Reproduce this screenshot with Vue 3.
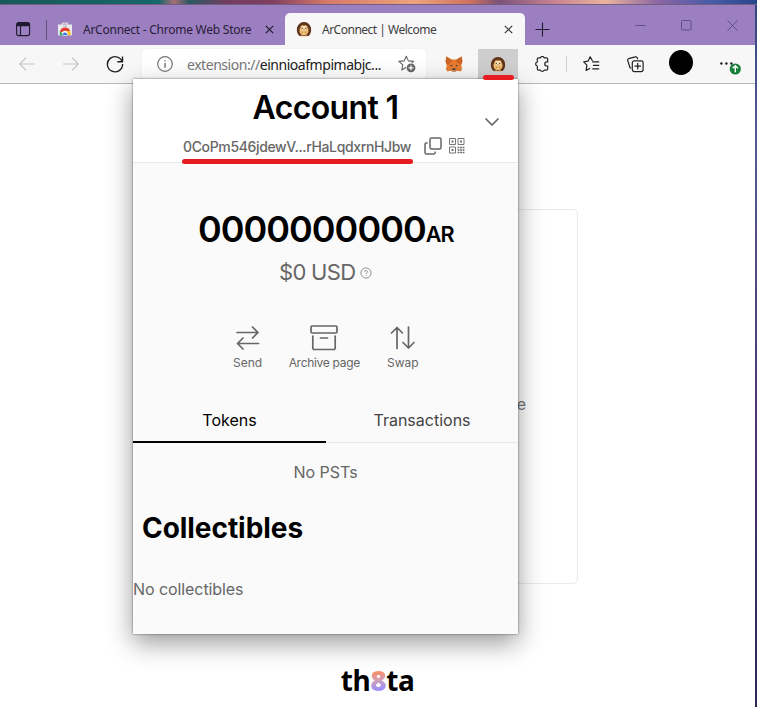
<script setup>
const actions = [
  { id: 'send', label: 'Send' },
  { id: 'archive', label: 'Archive page' },
  { id: 'swap', label: 'Swap' },
]
</script>

<template>
  <div class="window">
    <div class="wallpaper"></div>
    <div class="browser">
      <header class="tabbar">
        <svg class="tab-actions" width="16" height="16" viewBox="0 0 16 16" fill="none" stroke="#201a2e" stroke-width="1.1">
          <rect x="1.6" y="1.6" width="13" height="13" rx="2" />
          <path d="M2 2.9h12.2M2 4.2h12.2" stroke-width="2" />
          <path d="M5.5 4v10.5" />
        </svg>
        <i class="tab-sep"></i>
        <div class="tab store">
          <svg width="16" height="16" viewBox="0 0 16 16">
            <path d="M5.500 4V2.200h5V4" fill="none" stroke="#dcdce0" stroke-width="1.200" />
            <path d="M1 3.500h14v10.800H1z" fill="#e9e9ec" />
            <path d="M3 11.500a5.200 5.200 0 0 1 10.200-1.200H8z" fill="#e33b2e" />
            <path d="M2.800 14.300v-4.300L7 14.300z" fill="#35a853" />
            <path d="M8 10.200h5.200q.8 2 .4 4.100H7z" fill="#fbc116" />
            <circle cx="8" cy="12.400" r="2.700" fill="#fff" />
            <path d="M5.900 14.300a2.200 2.200 0 1 1 4.200 0z" fill="#3878e8" />
            <path d="M6 5.200h4" stroke="#bbb" />
          </svg>
          <span>ArConnect - Chrome Web Store</span>
          <svg class="close" width="9" height="9" viewBox="0 0 9 9"><path d="M.8.8l7.400 7.400M8.200.8L.8 8.200" stroke="#211a30" stroke-width="1.200" /></svg>
        </div>
        <div class="tab active">
          <svg width="16" height="16" viewBox="0 0 16 16">
            <path d="M3.500 15C1 13 .3 9.500 1.200 6.300 2.200 3 4.800 1 8 1s5.800 2 6.800 5.300c.9 3.200.2 6.700-2.300 8.700z" fill="#60351d" />
            <path d="M8 4.800C9.600 3.700 11.300 4.600 11.500 6.500c1.800 2 1.600 7.700-3.500 7.700S2.700 8.500 4.500 6.500C4.700 4.600 6.400 3.700 8 4.800z" fill="#eebd72" />
            <path d="M8 5.300c1.400-.8 2.700 0 2.800 1.400S9.800 9.500 8 9.500 5.100 8.100 5.200 6.700 6.600 4.500 8 5.300z" fill="#f8dfb0" />
            <circle cx="6.300" cy="7.300" r=".65" fill="#35231a" /><circle cx="9.700" cy="7.300" r=".65" fill="#35231a" />
            <path d="M7.300 8.300h1.400L8 9.100z" fill="#35231a" />
            <path d="M5.700 11.300h1.300M9 11.300h1.300" stroke="#8a5a35" stroke-width=".6" />
            <path d="M4.800 14.800h2.400M8.800 14.800h2.400" stroke="#d99a4e" />
          </svg>
          <span>ArConnect | Welcome</span>
          <svg class="close" width="9" height="9" viewBox="0 0 9 9"><path d="M.8.8l7.400 7.400M8.200.8L.8 8.200" stroke="#333" stroke-width="1.200" /></svg>
        </div>
        <svg class="new-tab" width="15" height="15" viewBox="0 0 15 15"><path d="M7.500.5v14M.5 7.500h14" stroke="#211a30" stroke-width="1.100" /></svg>
        <div class="controls">
          <svg width="11" height="11" viewBox="0 0 11 11"><path d="M.5 5.500h10" /></svg>
          <svg width="11" height="11" viewBox="0 0 11 11"><rect x=".5" y=".5" width="9.500" height="9.500" rx="1" /></svg>
          <svg width="11" height="11" viewBox="0 0 11 11"><path d="M.5.5l10 10M10.500.5l-10 10" /></svg>
        </div>
      </header>

      <nav class="toolbar">
        <svg class="back" width="16" height="14" viewBox="0 0 16 14"><path d="M7 .6L.8 7 7 13.400M.8 7H16" /></svg>
        <svg class="forward" width="16" height="14" viewBox="0 0 16 14"><path d="M9 .6L15.200 7 9 13.400M15.200 7H0" /></svg>
        <svg class="reload" width="18" height="18" viewBox="0 0 18 18"><path d="M16.400 7.500A7.600 7.600 0 1 0 16.600 9M16.500 1.500v5.200h-5.200" /></svg>
        <div class="address">
          <svg width="16" height="16" viewBox="0 0 16 16" fill="none" stroke="#737373"><circle cx="8" cy="8" r="7.300" stroke-width="1.200" /><path d="M8 7v4.800M8 4.200v1.300" stroke-width="1.400" /></svg>
          <span class="url"><em>extension://</em>einnioafmpimabjc...</span>
          <svg class="fav" width="18" height="18" viewBox="0 0 18 18">
            <path d="M8.300 1.200l2.100 4.700 5.200.5-3.800 3.500.9 5-4.400-2.600-4.500 2.600 1-5L.8 6.400l5.300-.5z" fill="none" stroke="#666" stroke-width="1.100" stroke-linejoin="round" />
            <circle cx="13" cy="12.800" r="5" fill="#fff" /><circle cx="13" cy="12.800" r="4.400" fill="#666" />
            <path d="M13 10.300v5M10.500 12.800h5" stroke="#fff" stroke-width="1.200" />
          </svg>
        </div>
        <svg class="fox" width="18" height="16" viewBox="0 0 18 16">
          <path d="M1.200.5l5.300 3h5l5.300-3 .6 5.300-1.200 4 .8 3-1.200 2.500-3.800-.5-1.600 1H7.600L6 14.800l-3.800.5L1 12.800l.8-3-1.200-4z" fill="#e8792c" />
          <path d="M1.200.5l5.300 3 .3 2.600-4.500 2.300L.6 5.800zM16.800.5l-5.300 3-.3 2.600 4.500 2.300 1.700-2.600z" fill="#c96525" />
          <path d="M1 12.800l4-1.200 1 3.200-3.800.5zM17 12.800l-4-1.200-1 3.200 3.800.5z" fill="#e07f33" />
          <path d="M4.800 8.900l2.500.4-.5 1.200zM13.200 8.900l-2.500.4.500 1.200z" fill="#26384a" />
          <path d="M6.500 14.800l1.200-1.300h2.600l1.200 1.300-1.300.8H7.800z" fill="#b98e70" /><path d="M7.600 12.400h2.800l.3 1.300H7.300z" fill="#252b33" />
        </svg>
        <div class="ext-active">
          <svg width="16" height="16" viewBox="0 0 16 16">
            <path d="M3.500 15C1 13 .3 9.500 1.200 6.300 2.200 3 4.800 1 8 1s5.800 2 6.800 5.300c.9 3.200.2 6.700-2.300 8.700z" fill="#60351d" />
            <path d="M8 4.800C9.600 3.700 11.300 4.600 11.500 6.500c1.800 2 1.600 7.700-3.500 7.700S2.700 8.500 4.500 6.500C4.700 4.600 6.400 3.700 8 4.800z" fill="#eebd72" />
            <path d="M8 5.300c1.400-.8 2.700 0 2.800 1.400S9.800 9.500 8 9.500 5.100 8.100 5.200 6.700 6.600 4.500 8 5.300z" fill="#f8dfb0" />
            <circle cx="6.300" cy="7.300" r=".65" fill="#35231a" /><circle cx="9.700" cy="7.300" r=".65" fill="#35231a" />
            <path d="M7.300 8.300h1.400L8 9.100z" fill="#35231a" />
            <path d="M5.700 11.300h1.300M9 11.300h1.300" stroke="#8a5a35" stroke-width=".6" />
            <path d="M4.800 14.800h2.400M8.800 14.800h2.400" stroke="#d99a4e" />
          </svg>
        </div>
        <svg class="puzzle" width="16" height="16" viewBox="0 0 16 16"><path d="M4.500 1.800h2a1.900 1.900 0 0 1 3.600 0h2.400a1.200 1.200 0 0 1 1.200 1.200v2.900h-.9a2 2 0 0 0 0 4.100h.9v2.900a1.200 1.200 0 0 1-1.200 1.200h-2.400a1.900 1.900 0 0 1-3.600 0h-2a1.200 1.200 0 0 1-1.200-1.200V10a2.100 2.100 0 0 1 0-4.100V3a1.200 1.200 0 0 1 1.200-1.200z" /></svg>
        <i class="tool-sep"></i>
        <svg class="favorites" width="17" height="16" viewBox="0 0 17 16"><path d="M9.500 5L7.200.8 5 5.200.7 5.900l3.200 3.300-.8 5.200 4.100-2.100M9.200 5.800h7M10 9.300h6.200M9.200 12.800h7" /></svg>
        <svg class="collections" width="17" height="17" viewBox="0 0 17 17"><path d="M4.200 12.200L3 11.800.7 4.400q-.3-1.300.9-1.700L8.300.8q1.400-.3 1.900 1l.5 1.500M7.300 4.800h6.800a2 2 0 0 1 2 2v6.800a2 2 0 0 1-2 2H7.300a2 2 0 0 1-2-2V6.800a2 2 0 0 1 2-2zM10.700 7v6.500M7.500 10.200h6.500" /></svg>
        <div class="avatar"></div>
        <div class="more">
          <svg width="21" height="18" viewBox="0 0 21 18">
            <g fill="#222"><circle cx="1.400" cy="6.500" r="1.200" /><circle cx="6.400" cy="6.500" r="1.200" /><circle cx="11.400" cy="6.500" r="1.200" /></g>
            <circle cx="15.300" cy="12" r="5.600" fill="#16803b" /><path d="M15.300 15.300V9M12.700 11.300l2.600-2.500 2.600 2.500" stroke="#fff" stroke-width="1.400" fill="none" />
          </svg>
        </div>
      </nav>

      <main class="page">
        <section class="welcome"><span>e</span></section>
        <div class="brand">th<b>8</b>ta</div>
      </main>
    </div>

    <aside class="popup">
      <div class="account">
        <h1>Account 1</h1>
        <div class="addr">
          <span>0CoPm546jdewV...rHaLqdxrnHJbw</span>
          <svg class="copy" width="18" height="18" viewBox="0 0 18 18" fill="none" stroke="#666" stroke-width="1.500" stroke-linejoin="round"><rect x="6" y="1" width="11" height="11" rx="1.500" /><path d="M3.700 6H2.200Q1 6 1 7.200v8.300Q1 17 2.400 17h7.400q1.400 0 1.400-1.400v-1.200" /></svg>
          <svg class="qr" width="16" height="16" viewBox="0 0 16 16" fill="none" stroke="#777">
            <path d="M.5.5h6v6h-6zM9 .5h6v6H9zM.5 9h6v6h-6z" />
            <path d="M2.600 3.500h1.800M11.100 3.500h1.800M2.600 12h1.800" stroke="#666" stroke-width="1.800" />
            <path d="M8.600 9.500h1.800M11.100 9.500h1.800M13.600 9.500h1.800M8.600 12h1.800M11.100 12h1.800M13.600 12h1.800M8.600 14.500h1.800M11.100 14.500h1.800M13.600 14.500h1.800" stroke="#666" stroke-width="1.700" />
          </svg>
        </div>
        <svg class="chevron" width="14" height="8" viewBox="0 0 14 8"><path d="M1 1l6 6 6-6" fill="none" stroke="#666" stroke-width="1.700" stroke-linecap="round" stroke-linejoin="round" /></svg>
        <i class="mark addr-mark"></i>
      </div>

      <div class="balance">0000000000<small>AR</small></div>
      <div class="fiat">
        <span>$0 USD</span>
        <svg width="12" height="12" viewBox="0 0 12 12" fill="none" stroke="#777"><circle cx="6" cy="6" r="5.100" stroke-width=".8" /><path d="M4.600 4.800a1.400 1.400 0 1 1 2 1.300Q6 6.400 6 7.100M6 8.100v.8" stroke-width=".8" /></svg>
      </div>

      <div class="actions">
        <div v-for="a in actions" :key="a.id" class="action" :class="a.id">
          <svg v-if="a.id === 'send'" width="24" height="26" viewBox="0 0 24 26"><path d="M1 7.500h21M16.500 2l5.500 5.500-5.500 5.500M22.500 18.500H1.500M7 13l-5.500 5.500L7 24" /></svg>
          <svg v-else-if="a.id === 'archive'" width="28" height="26" viewBox="0 0 28 26"><rect x="1" y="1" width="26" height="7" rx="1.200" /><path d="M2.800 11v11.800q0 1.700 1.700 1.700h19q1.700 0 1.700-1.700V11M10.500 13h7" /></svg>
          <svg v-else width="26" height="26" viewBox="0 0 26 26"><path d="M7 23.500V2.500M1.500 8L7 2.500 12.500 8M18.500 2v21M13 17.500l5.500 5.500 5.500-5.500" /></svg>
          <span>{{ a.label }}</span>
        </div>
      </div>

      <div class="tabs"><div class="selected"><span>Tokens</span></div><div><span>Transactions</span></div></div>
      <p class="empty">No PSTs</p>
      <h2>Collectibles</h2>
      <p class="none">No collectibles</p>
      <i class="mark ext-mark"></i>
    </aside>
  </div>
</template>

<style>
body { margin: 0; overflow: hidden; }
</style>

<style scoped>
* { box-sizing: border-box; }
svg { display: block; flex: none; }
.window { position: relative; width: 757px; height: 707px; padding-right: 2px; overflow: hidden; background: linear-gradient(#34467f 0, #555a96 20%, #4a356e 60%, #2c2657); font-family: "Inter", sans-serif; }
.wallpaper { height: 5px; width: 757px; border-bottom: 1px solid #716080; background: linear-gradient(90deg, #17595b 0, #17676a 21%, #a76e79 23%, #2a5961 25%, #743d62 30%, #803f60 36%, #d77869 43%, #eca47b 55%, #cf715f 62%, #7b5279 66%, #c78191 73%, #ebb39c 80%, #8b65a4 87%, #465caa 94%, #28458b); }
.browser { height: 702px; display: flex; flex-direction: column; background: #fff; }
.tabbar { height: 40px; background: #9b7fc0; display: flex; align-items: center; font: 12px "Noto Sans", sans-serif; color: #292039; }
.tab-actions { margin: 8px 0 0 15px; }
.tab-sep { width: 1px; height: 20px; margin: 9px 11px 0 15px; background: #625078; }
.tab { display: flex; align-items: center; white-space: nowrap; }
.store { width: 227px; padding-top: 8px; }
.store svg:first-child { margin-left: -1px; }
.store span { width: 182px; margin-left: 10px; letter-spacing: -.25px; }
.active { width: 240px; height: 32px; margin-top: 8px; padding-left: 11px; background: #f7f7f7; border-radius: 5px 5px 0 0; color: #404040; }
.active span { width: 182px; margin-left: 10px; letter-spacing: -.5px; }
.new-tab { margin: 8px 0 0 10px; }
.controls { display: flex; gap: 35px; margin-left: 85px; }
.controls svg { fill: none; stroke: #654d83; stroke-width: 1; }
.toolbar { height: 39px; background: #f7f7f7; display: flex; align-items: center; border-bottom: 1px solid #b8b8b8; }
.toolbar > svg { fill: none; stroke: #222; stroke-width: 1.2; stroke-linejoin: round; }
.toolbar > .back { margin-left: 19px; stroke: #c5c5c5; }
.toolbar > .forward { margin-left: 28px; stroke: #c5c5c5; }
.toolbar > .reload { margin-left: 27px; stroke-width: 1.4; }
.address { width: 284px; height: 30px; margin-left: 18px; padding-left: 15px; background: #fff; border-radius: 4px; display: flex; align-items: center; box-shadow: 0 0 2px #0001; }
.url { width: 210px; margin-left: 14px; font: 14px "Noto Sans", sans-serif; color: #202020; white-space: nowrap; letter-spacing: -.46px; }
.url em { font-style: normal; color: #777; }
.fav { margin-left: 1px; }
.toolbar > .fox { margin-left: 19px; stroke: none; }
.ext-active { width: 40px; height: 30px; margin-left: 15px; display: grid; place-items: center; background: #cecece; }
.toolbar > .puzzle { margin-left: 16px; }
.tool-sep { width: 1px; height: 16px; margin-left: 16px; background: #ccc; }
.toolbar > .favorites { margin-left: 16px; }
.toolbar > .collections { margin-left: 27px; }
.avatar { width: 24px; height: 25px; margin: -3px 0 0 25px; border-radius: 50%; background: #000; }
.more { margin-left: 27px; padding-top: 4px; }
.page { flex: 1; padding-top: 125px; display: flex; flex-direction: column; align-items: center; }
.welcome { width: 401px; height: 375px; border: 1px solid #eaeaea; border-radius: 5px; display: flex; justify-content: flex-end; padding: 184px 51px 0 0; font-size: 16px; line-height: 20px; color: #777; }
.brand { margin-top: 78px; font: 700 28px/36px "Noto Sans", sans-serif; color: #000; letter-spacing: -.4px; }
.brand b { background: linear-gradient(170deg, #fa8d69 30%, #cda0bd 52%, #9a8fff 75%); background-clip: text; color: transparent; }
.popup { position: absolute; left: 133px; top: 79px; width: 385px; height: 555px; background: #fafafa; box-shadow: 0 0 2px #0008, 0 9px 24px #0006; color: #666; white-space: nowrap; }
.account { position: relative; height: 84px; padding-top: 9px; background: #fff; border-bottom: 1px solid #e8e8e8; }
h1 { margin: 0; font-size: 32px; line-height: 40px; font-weight: 600; text-align: center; color: #000; letter-spacing: -.65px; }
.addr { display: flex; align-items: center; height: 20px; margin-top: 8px; padding-left: 50px; font-size: 14px; font-weight: 500; }
.addr span { width: 229px; letter-spacing: -.36px; }
.copy { margin-left: 12px; }
.qr { margin-left: 7px; }
.chevron { position: absolute; left: 352px; top: 39px; }
.mark { position: absolute; height: 5px; border-radius: 3px; background: #e81b20; }
.addr-mark { left: 49px; top: 80px; width: 231px; }
.ext-mark { left: 350px; top: -4px; width: 31px; }
.balance { margin-top: 43px; padding-left: 65px; font-size: 36px; line-height: 46px; font-weight: 600; color: #000; letter-spacing: -.98px; }
.balance small { font-size: 21.6px; letter-spacing: -.8px; }
.fiat { display: flex; align-items: center; height: 30px; padding-left: 146px; font-size: 22px; letter-spacing: -.7px; }
.fiat svg { margin: 2px 0 0 5px; }
.actions { display: flex; margin-top: 38px; padding-left: 100px; height: 50px; }
.action { display: flex; flex-direction: column; align-items: center; font-size: 12px; line-height: 16px; }
.action svg { fill: none; stroke: #666; stroke-width: 1.7; stroke-linecap: round; stroke-linejoin: round; }
.action span { margin-top: 4px; }
.archive { margin-left: 26.5px; letter-spacing: -.3px; }
.swap { margin-left: 27px; }
.tabs { display: grid; grid-template-columns: 193px 192px; height: 44px; margin-top: 24px; font-size: 16px; line-height: 42px; text-align: center; color: #444; }
.tabs > div { border-bottom: 1px solid #e8e8e8; }
.tabs .selected { border-bottom: 2px solid #000; color: #000; }
.empty { margin: 17px 0 0; text-align: center; font-size: 16px; line-height: 24px; }
h2 { margin: 26px 0 0 9px; font-size: 28px; line-height: 36px; font-weight: 700; color: #000; letter-spacing: -.05px; }
.none { margin: 31px 0 0; font-size: 16px; line-height: 24px; letter-spacing: -.08px; }
</style>
